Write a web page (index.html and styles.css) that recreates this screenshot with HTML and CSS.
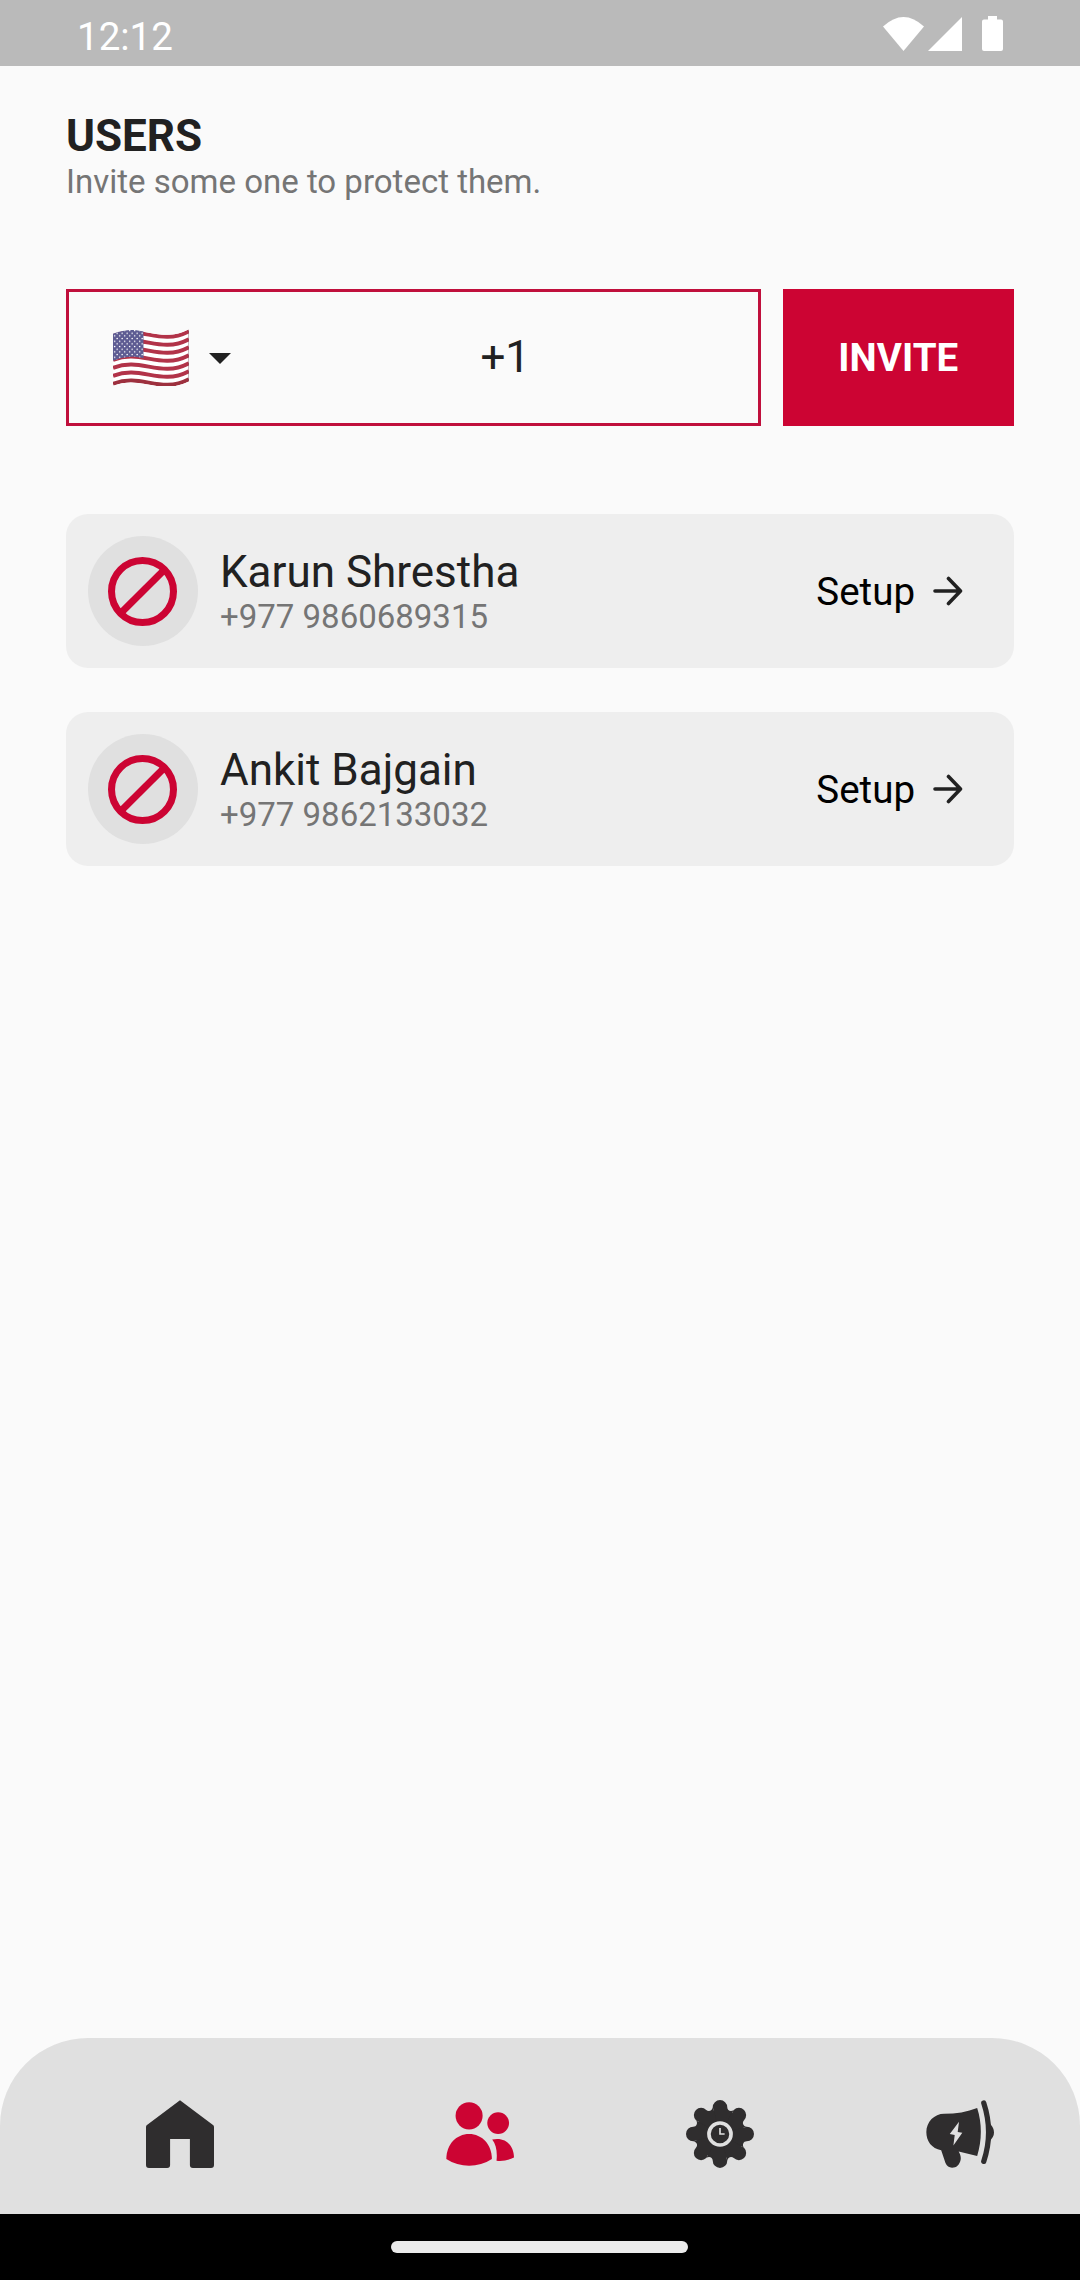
FILE: index.html
```html
<!DOCTYPE html>
<html lang="en">
<head>
<meta charset="utf-8">
<title>Users</title>
<link rel="stylesheet" href="styles.css">
</head>
<body>
<svg class="defs" aria-hidden="true">
  <symbol id="blocked" viewBox="0 0 206 206"><circle cx="103" cy="103" r="92.5"/><path d="M40 166 166 40"/></symbol>
  <symbol id="arrow" viewBox="0 0 30 30"><path d="M2 15H27M15.500 2.500 27.500 15 15.500 27.500"/></symbol>
  <path id="tooth" d="M0 0-22-81A22 22 0 0 1 22-81C22-71 33-66 41.700-72.800Z"/>
</svg>
<div class="screen">
  <header class="status">
    <span class="clock">12:12</span>
    <svg class="status-icons" viewBox="0 0 122 36" fill="#fff">
      <path d="M0 10.500Q20.500-8.500 41 10.500L20.500 35Z"/>
      <path d="M45 35 79 1V35Z"/>
      <path d="M105 0h9v3.500h4q2 0 2 2V33q0 2-2 2h-17q-2 0-2-2V5.500q0-2 2-2h4Z"/>
    </svg>
  </header>
  <main class="content">
    <h1 class="title">USERS</h1>
    <p class="subtitle">Invite some one to protect them.</p>
    <form class="invite">
      <div class="phone-field">
        <svg class="flag" viewBox="0 0 228 170">
          <defs>
            <clipPath id="cloth"><path d="M0 14C85-20 140 46 228 0V156C140 202 85 136 0 170Z"/></clipPath>
            <clipPath id="canton"><path d="M0 14C35 0 64 0 92 7V87C64 80 35 80 0 95Z"/></clipPath>
            <pattern id="stars" width="15" height="16" patternUnits="userSpaceOnUse">
              <circle cx="5" cy="4" r="2.300" fill="#fff"/><circle cx="12.500" cy="12" r="2.300" fill="#fff"/>
            </pattern>
          </defs>
          <g clip-path="url(#cloth)">
            <rect width="228" height="180" fill="#fff"/>
            <g fill="none" stroke="#b23349" stroke-width="12">
              <path d="M0 20C85-14 140 52 228 6"/>
              <path d="M0 44C85 10 140 76 228 30"/>
              <path d="M0 68C85 34 140 100 228 54"/>
              <path d="M0 92C85 58 140 124 228 78"/>
              <path d="M0 116C85 82 140 148 228 102"/>
              <path d="M0 140C85 106 140 172 228 126"/>
              <path d="M0 164C85 130 140 196 228 150" stroke="#9d303e"/>
            </g>
            <path d="M227 0V170" stroke="#815763" stroke-opacity=".5" stroke-width="3"/>
          </g>
          <g clip-path="url(#canton)"><rect width="93" height="100" fill="#5d5b92"/><rect width="93" height="100" fill="url(#stars)"/></g>
        </svg>
        <svg class="caret" viewBox="0 0 22 11"><path d="M0 0H22L11 11Z" fill="#212121"/></svg>
        <span class="dial-code">+1</span>
      </div>
      <button class="invite-button" type="button">INVITE</button>
    </form>
    <ul class="users">
      <li class="user">
        <span class="avatar"><svg><use href="#blocked"/></svg></span>
        <div class="details"><p class="name">Karun Shrestha</p><p class="phone">+977 9860689315</p></div>
        <a class="setup">Setup<svg><use href="#arrow"/></svg></a>
      </li>
      <li class="user">
        <span class="avatar"><svg><use href="#blocked"/></svg></span>
        <div class="details"><p class="name">Ankit Bajgain</p><p class="phone">+977 9862133032</p></div>
        <a class="setup">Setup<svg><use href="#arrow"/></svg></a>
      </li>
    </ul>
  </main>
  <nav class="tabs">
    <svg class="tab" viewBox="437 239 206 206"><path d="M540 240 640 315Q643 317 643 321V436Q643 445 634 445H579Q570 445 570 436V357H510V436Q510 445 501 445H446Q437 445 437 436V321Q437 317 440 315Z"/></svg>
    <svg class="tab tab-users" viewBox="77 89 206 206"><circle cx="147" cy="137" r="41"/><circle cx="235" cy="159" r="33"/><path d="M78 268C78 224 108 192 147 192S216 224 216 268C175 295 119 295 78 268Z"/><path d="M217 209C258 200 283 228 283 263Q258 276 230 273C233 248 229 224 217 209Z"/></svg>
    <svg class="tab" viewBox="-103 -103 206 206">
      <circle r="74"/>
      <use href="#tooth"/>
      <use href="#tooth" transform="rotate(45)"/>
      <use href="#tooth" transform="rotate(90)"/>
      <use href="#tooth" transform="rotate(135)"/>
      <use href="#tooth" transform="rotate(180)"/>
      <use href="#tooth" transform="rotate(225)"/>
      <use href="#tooth" transform="rotate(270)"/>
      <use href="#tooth" transform="rotate(315)"/>
      <circle r="33.500" fill="none" stroke="#e0e0e0" stroke-width="11"/>
      <path d="M0-18V0H14" fill="none" stroke="#e0e0e0" stroke-width="5"/>
    </svg>
    <svg class="tab" viewBox="77 239 206 206">
      <path d="M232 263C247 310 247 360 232 409L176 395Q184 409 182 420C178 437 169 444 156 444Q142 444 136 430L123 391C94 386 78 364 78 336C78 306 102 281 132 281C168 281 202 275 232 263Z"/>
      <path d="M177 305 149 342 164 345 160 377 187 338 173 336Z" fill="#e0e0e0"/>
      <path d="M252 248C272 309 272 365 252 425" fill="none" stroke="#2f2d2e" stroke-width="16" stroke-linecap="round"/>
      <path d="M270 310Q283 323 283 337T270 363Z"/>
    </svg>
  </nav>
  <footer class="system-bar"><span class="pill"></span></footer>
</div>
</body>
</html>
```
FILE: styles.css
```css
* { box-sizing: border-box; margin: 0; padding: 0; }
body { background: #fafafa; font-family: Roboto, sans-serif; color: #212121; }
svg { display: block; flex: none; }
.defs { position: absolute; width: 0; height: 0; }
.screen { width: 1080px; height: 2280px; display: flex; flex-direction: column; }

.status { height: 66px; background: #bababa; display: flex; justify-content: space-between; padding: 0 75px 0 77px; }
.clock { color: #fff; font-size: 38.5px; line-height: 74px; height: 66px; }
.status-icons { width: 122px; height: 36px; margin-top: 16px; }

.content { flex: 1; padding: 44px 66px 0; }
.title { font-size: 44px; line-height: 52px; font-weight: 700; }
.subtitle, .phone { font-size: 33px; line-height: 39px; color: #757575; }

.invite { display: flex; gap: 22px; margin-top: 88px; height: 137px; }
.phone-field { width: 694.5px; border: 3px solid #c00f3c; display: flex; align-items: center; padding-left: 44px; }
.flag { width: 76px; height: 57px; }
.caret { width: 22px; height: 11px; margin: 1px 0 0 20px; }
.dial-code { flex: 1; text-align: center; font-size: 44px; line-height: 52px; margin: 0 0 2px 22px; }
.invite-button { flex: 1; border: 0; background: #cc0433; color: #fff; font: 700 38.5px Roboto, sans-serif; }

.users { list-style: none; display: flex; flex-direction: column; gap: 44px; margin-top: 88px; }
.user { height: 154px; border-radius: 22px; background: #eee; display: flex; align-items: center; padding: 0 51px 0 22px; }
.avatar { width: 110px; height: 110px; border-radius: 50%; background: #e0e0e0; display: grid; place-items: center; }
.avatar svg { width: 69px; height: 69px; margin-left: -1px; fill: none; stroke: #cc0433; stroke-width: 21; }
.details { margin-left: 22px; flex: 1; }
.name { font-size: 44px; line-height: 52px; }
.phone { line-height: 38px; }
.setup { display: flex; align-items: center; gap: 18px; font-size: 38.5px; color: #000; }
.setup svg { width: 30px; height: 30px; fill: none; stroke: #212121; stroke-width: 3.6; stroke-linecap: round; stroke-linejoin: round; }

.tabs { height: 176px; background: #e0e0e0; border-radius: 88px 88px 0 0; display: flex; align-items: center; padding: 16px 86px 0 146px; }
.tab { width: 68px; height: 68px; fill: #2f2d2e; margin-right: 172px; }
.tab:first-child { margin-right: 232px; }
.tab:last-child { margin-right: 0; }
.tab-users { fill: #cc0433; }

.system-bar { height: 66px; background: #000; display: flex; justify-content: center; padding: 27px 1px 0 0; }
.pill { width: 297px; height: 12px; border-radius: 6px; background: #ebebeb; }
```
